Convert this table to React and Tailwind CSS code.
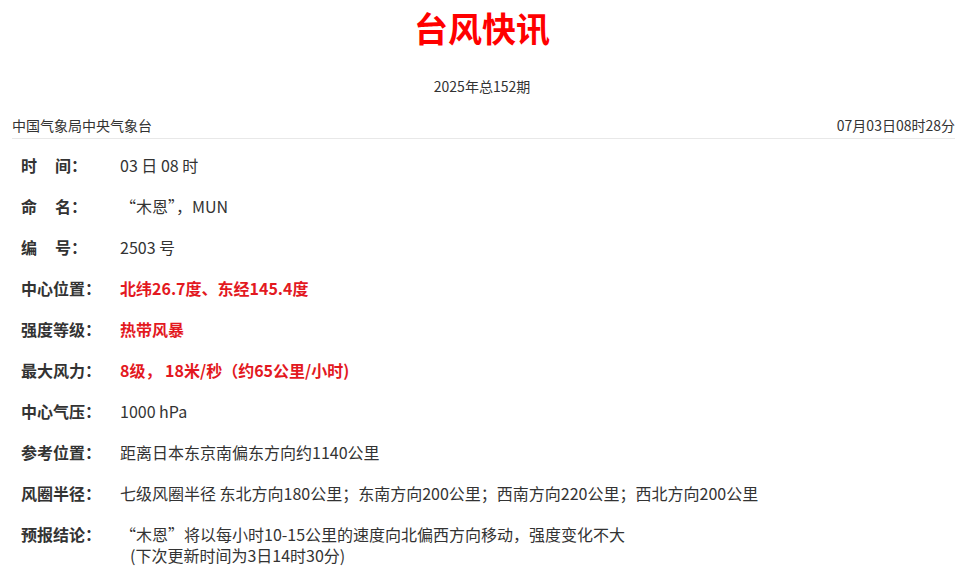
export default function App() {
  const font = { fontFamily: '"Noto Sans CJK SC", "Noto Sans", sans-serif' };
  const rows = [
    { label: <span>时<span className="ml-[18px]">间：</span></span>, value: "03 日 08 时" },
    { label: <span>命<span className="ml-[18px]">名：</span></span>, value: "“木恩”，MUN" },
    { label: <span>编<span className="ml-[18px]">号：</span></span>, value: "2503 号" },
    { label: "中心位置：", value: "北纬26.7度、东经145.4度", red: true },
    { label: "强度等级：", value: "热带风暴", red: true },
    { label: "最大风力：", value: "8级， 18米/秒（约65公里/小时)", red: true },
    { label: "中心气压：", value: "1000 hPa" },
    { label: "参考位置：", value: "距离日本东京南偏东方向约1140公里" },
    { label: "风圈半径：", value: "七级风圈半径 东北方向180公里；东南方向200公里；西南方向220公里；西北方向200公里" },
    {
      label: "预报结论：",
      value: (
        <>
          <div>“木恩”将以每小时10-15公里的速度向北偏西方向移动，强度变化不大</div>
          <div className="pl-[10px]">(下次更新时间为3日14时30分)</div>
        </>
      ),
    },
  ];
  return (
    <div className="w-[979px] h-[581px] bg-white text-[#333] overflow-hidden" style={font}>
      <div className="w-[964px]">
        <div className="h-[56px] flex items-center justify-center">
          <h1 className="text-[34px] font-bold text-[#ff0000] leading-none">台风快讯</h1>
        </div>
        <div className="h-[60px] flex items-center justify-center text-[14px]">2025年总152期</div>
        <div className="ml-[12px] mr-[9px] h-[23px] flex items-start justify-between text-[14px] leading-[18px] border-b border-[#e8e8e8]">
          <span>中国气象局中央气象台</span>
          <span>07月03日08时28分</span>
        </div>
        <div className="pt-[6px] pl-[21px]">
          {rows.map((r, i) => (
            <div key={i} className="flex py-[10px] text-[16px] leading-[21px]">
              <div className="w-[99px] shrink-0 font-bold text-[#333]">{r.label}</div>
              <div className={r.red ? "font-bold text-[#e3191f]" : "text-[#333]"}>{r.value}</div>
            </div>
          ))}
        </div>
      </div>
    </div>
  );
}
